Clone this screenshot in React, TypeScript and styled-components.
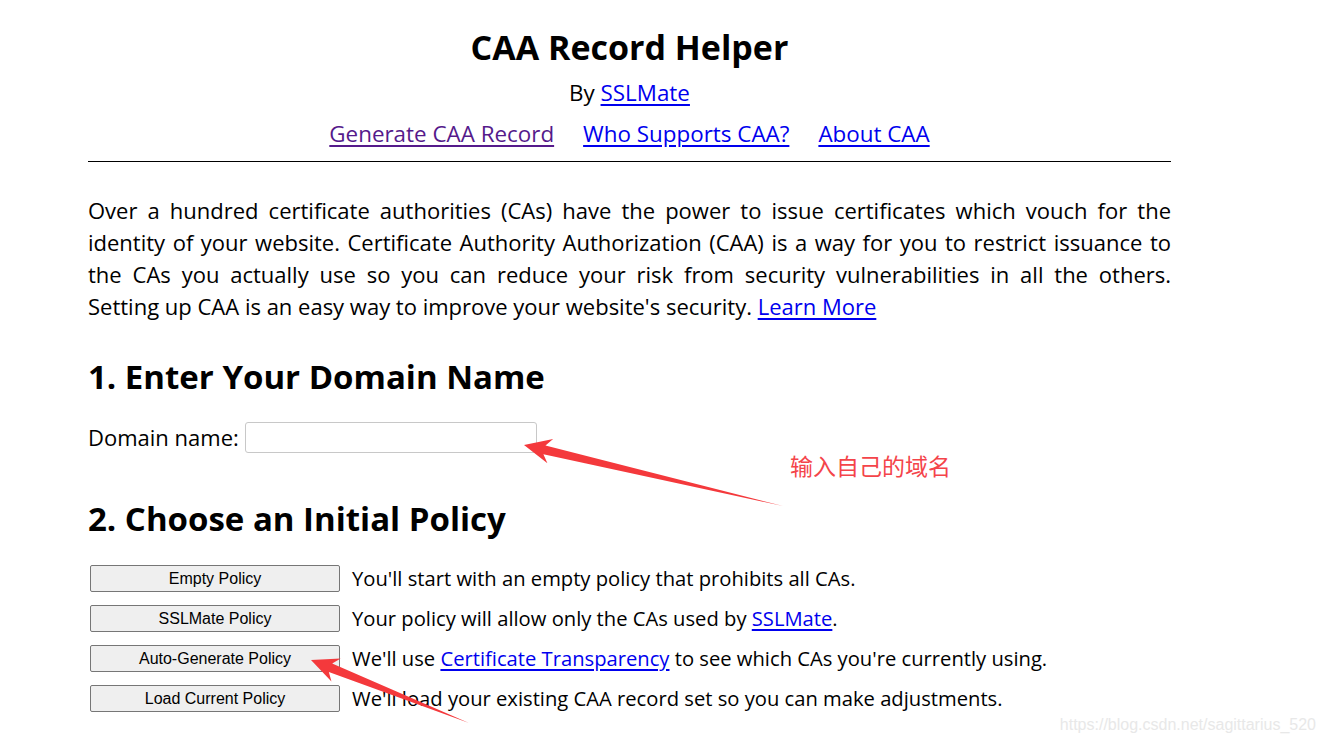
import React from "react";
import styled, { createGlobalStyle } from "styled-components";

const Global = createGlobalStyle`
  html, body { margin: 0; padding: 0; background: #fff; }
  body { font-family: "Open Sans", "Noto Sans", sans-serif; color: #000; }
`;

const Page = styled.div`
  position: relative;
  width: 1326px;
  height: 744px;
  overflow: hidden;
`;

const Column = styled.div`
  margin-left: 88px;
  width: 1083px;
`;

const Header = styled.header`
  display: flex;
  flex-direction: column;
  align-items: center;
  padding-top: 24px;
  border-bottom: 1px solid #000;
  padding-bottom: 12px;
`;

const Title = styled.h1`
  margin: 0;
  font-size: 34px;
  line-height: 46px;
  font-weight: 700;
`;

const Byline = styled.div`
  font-size: 22.4px;
  line-height: 30px;
  margin-top: 8px;
`;

const Nav = styled.nav`
  display: flex;
  gap: 29px;
  font-size: 22.4px;
  line-height: 30px;
  margin-top: 11px;
`;

const Link = styled.a<{ $visited?: boolean }>`
  color: ${(p) => (p.$visited ? "#551a8b" : "#0000ee")};
  text-decoration: underline;
  text-underline-offset: 3px;
`;

const Para = styled.p`
  margin: 32px 0 0;
  font-size: 22px;
  line-height: 32px;
  text-align: justify;
`;

const NoBreak = styled.span`
  white-space: nowrap;
`;

const H2 = styled.h2<{ $gap: number }>`
  margin: ${(p) => p.$gap}px 0 0;
  font-size: 33px;
  line-height: 44px;
  font-weight: 700;
`;

const FieldRow = styled.div`
  display: flex;
  align-items: center;
  gap: 6px;
  font-size: 22px;
  line-height: 31px;
  margin-top: 23px;
`;

const Input = styled.input`
  width: 292px;
  height: 31px;
  box-sizing: border-box;
  border: 1px solid #c8c8c8;
  border-radius: 3px;
  background: #fff;
`;

const PolicyList = styled.div`
  display: flex;
  flex-direction: column;
  gap: 13px;
  margin-top: 24px;
`;

const PolicyRow = styled.div`
  display: flex;
  align-items: center;
  gap: 12px;
  font-size: 20.2px;
  line-height: 27px;
`;

const PolicyButton = styled.button`
  width: 250px;
  height: 27px;
  margin-left: 2px;
  box-sizing: border-box;
  border: 1px solid #767676;
  border-radius: 2px;
  background: #efefef;
  font-family: "Liberation Sans", Arial, sans-serif;
  font-size: 16px;
  color: #000;
  padding: 0;
`;

const Note = styled.div`
  position: absolute;
  left: 790px;
  top: 451px;
  font-family: "Noto Sans CJK SC", sans-serif;
  font-size: 23px;
  line-height: 28px;
  color: #f4444a;
`;

const Overlay = styled.svg`
  position: absolute;
  left: 0;
  top: 0;
  pointer-events: none;
`;

const Watermark = styled.div`
  position: absolute;
  right: 10px;
  top: 716px;
  font-family: "Liberation Sans", Arial, sans-serif;
  font-size: 16px;
  color: #e8e8e8;
`;

function Arrow({ x1, y1, x2, y2 }: { x1: number; y1: number; x2: number; y2: number }) {
  const dx = x2 - x1;
  const dy = y2 - y1;
  const len = Math.hypot(dx, dy);
  const ux = dx / len;
  const uy = dy / len;
  const nx = -uy;
  const ny = ux;
  const headLen = 27;
  const headW = 12.5;
  const neckW = 4.5;
  const bx = x2 - ux * headLen;
  const by = y2 - uy * headLen;
  const nbx = x2 - ux * (headLen - 6);
  const nby = y2 - uy * (headLen - 6);
  const pts = [
    [x1, y1],
    [nbx + nx * neckW, nby + ny * neckW],
    [bx + nx * headW, by + ny * headW],
    [x2, y2],
    [bx - nx * headW, by - ny * headW],
    [nbx - nx * neckW, nby - ny * neckW],
  ]
    .map((p) => p.join(","))
    .join(" ");
  return <polygon points={pts} fill="#f4393c" />;
}

export default function App() {
  return (
    <>
      <Global />
      <Page>
        <Column>
          <Header>
            <Title>CAA Record Helper</Title>
            <Byline>
              By <Link href="#">SSLMate</Link>
            </Byline>
            <Nav>
              <Link href="#" $visited>
                Generate CAA Record
              </Link>
              <Link href="#">Who Supports CAA?</Link>
              <Link href="#">About CAA</Link>
            </Nav>
          </Header>
          <Para>
            Over a hundred certificate authorities (CAs) have the power to issue certificates which vouch for the
            identity of your website. Certificate Authority Authorization (CAA) is a way for you to restrict issuance
            to the CAs you actually use so you can reduce your risk from security vulnerabilities in all the others.{" "}
            <NoBreak>Setting up</NoBreak> CAA is an easy way to improve your website's security.{" "}
            <Link href="#">Learn More</Link>
          </Para>
          <H2 $gap={33}>1. Enter Your Domain Name</H2>
          <FieldRow>
            <label>Domain name:</label>
            <Input type="text" />
          </FieldRow>
          <H2 $gap={44}>2. Choose an Initial Policy</H2>
          <PolicyList>
            <PolicyRow>
              <PolicyButton>Empty Policy</PolicyButton>
              <span>You'll start with an empty policy that prohibits all CAs.</span>
            </PolicyRow>
            <PolicyRow>
              <PolicyButton>SSLMate Policy</PolicyButton>
              <span>
                Your policy will allow only the CAs used by <Link href="#">SSLMate</Link>.
              </span>
            </PolicyRow>
            <PolicyRow>
              <PolicyButton>Auto-Generate Policy</PolicyButton>
              <span>
                We'll use <Link href="#">Certificate Transparency</Link> to see which CAs you're currently using.
              </span>
            </PolicyRow>
            <PolicyRow>
              <PolicyButton>Load Current Policy</PolicyButton>
              <span>We'll load your existing CAA record set so you can make adjustments.</span>
            </PolicyRow>
          </PolicyList>
        </Column>
        <Note>输入自己的域名</Note>
        <Overlay width="1326" height="744" viewBox="0 0 1326 744">
          <Arrow x1={783} y1={506} x2={524} y2={445} />
          <Arrow x1={469} y1={723} x2={311} y2={660} />
        </Overlay>
        <Watermark>https://blog.csdn.net/sagittarius_520</Watermark>
      </Page>
    </>
  );
}
